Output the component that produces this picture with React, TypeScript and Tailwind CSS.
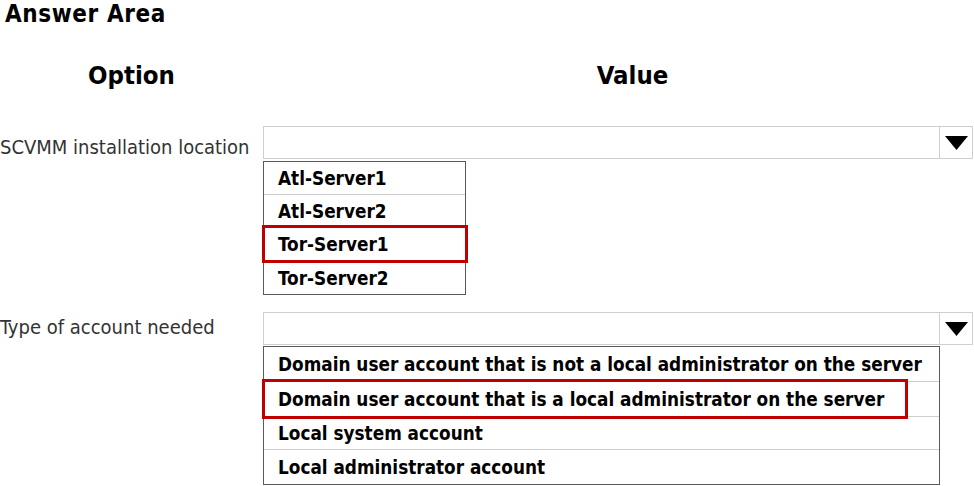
import React from "react";

const font = { fontFamily: '"DejaVu Sans Condensed", "DejaVu Sans", sans-serif' };

function Dropdown() {
  return (
    <div className="flex h-[33px] border border-[#cfcfcf] bg-white">
      <div className="flex-1" />
      <div className="flex w-[33px] items-center justify-center border-l border-[#cfcfcf]">
        <svg width="23" height="14" viewBox="0 0 23 14">
          <polygon points="0,0 23,0 11.5,14" fill="#000" />
        </svg>
      </div>
    </div>
  );
}

function List({
  items,
  width,
  heights,
  selected,
  redWidth,
}: {
  items: string[];
  width: string;
  heights: number[];
  selected: number;
  redWidth: string;
}) {
  return (
    <div className={`relative ${width} border border-[#5a5a5a] bg-white`}>
      {items.map((t, i) => (
        <div
          key={t}
          className={`flex items-center whitespace-nowrap pl-[14px] pt-[3px] text-[18.8px] font-bold text-black ${
            i < items.length - 1 ? "border-b border-[#cfcfcf]" : ""
          }`}
          style={{ height: heights[i] }}
        >
          {t}
        </div>
      ))}
      <div
        className={`pointer-events-none absolute left-[-2px] ${redWidth} border-[3px] border-[#c00000]`}
        style={{
          top: heights.slice(0, selected).reduce((a, b) => a + b, 0) - 3,
          height: heights[selected] + 5,
        }}
      />
    </div>
  );
}

export default function App() {
  return (
    <div className="relative h-[486px] w-[974px] overflow-hidden bg-white text-black" style={font}>
      <div className="h-[24px] pl-[5px] text-[24px] font-bold leading-[28px] tracking-[0.6px]">Answer Area</div>
      <div className="mt-[36px] flex h-[30px] items-center text-[25.5px] font-bold leading-[30px]">
        <div className="w-[263px] text-center">Option</div>
        <div className="flex-1 pl-[28px] text-center">Value</div>
      </div>
      <div className="mt-[36px] flex">
        <div className="w-[263px] whitespace-nowrap pt-[9px] text-[20px] leading-[24px] text-[#333]">SCVMM installation location</div>
        <div className="flex-1 pr-[1px]">
          <Dropdown />
          <div className="mt-[2px]">
            <List
              items={["Atl-Server1", "Atl-Server2", "Tor-Server1", "Tor-Server2"]}
              width="w-[203px]"
              heights={[33, 33, 33, 33]}
              selected={2}
              redWidth="w-[206px]"
            />
          </div>
        </div>
      </div>
      <div className="mt-[17px] flex">
        <div className="w-[263px] whitespace-nowrap pt-[3px] text-[20px] leading-[24px] text-[#333]">Type of account needed</div>
        <div className="flex-1 pr-[1px]">
          <Dropdown />
          <div className="mt-[1px]">
            <List
              items={[
                "Domain user account that is not a local administrator on the server",
                "Domain user account that is a local administrator on the server",
                "Local system account",
                "Local administrator account",
              ]}
              width="w-[677px]"
              heights={[35, 35, 33, 34]}
              selected={1}
              redWidth="w-[646px]"
            />
          </div>
        </div>
      </div>
    </div>
  );
}
